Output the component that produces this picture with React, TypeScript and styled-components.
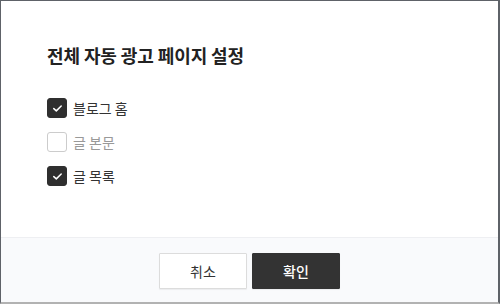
import React, { useState } from "react";
import styled, { createGlobalStyle } from "styled-components";

const Global = createGlobalStyle`
  html, body { margin: 0; padding: 0; background: #fff; }
  body { font-family: "Noto Sans CJK KR", "Noto Sans", sans-serif; }
  * { box-sizing: border-box; }
`;

const Frame = styled.div`
  width: 500px;
  height: 304px;
  display: flex;
  flex-direction: column;
  border-top: 1px solid #5e6268;
  border-left: 1px solid #5e6268;
  border-right: 2px solid #5e6268;
  border-bottom: 2px solid #b2b2b2;
  background: #fff;
`;

const Body = styled.div`
  flex: 1;
  padding: 41px 46px 0;
  display: flex;
  flex-direction: column;
`;

const Title = styled.h2`
  margin: 0;
  font-size: 18px;
  line-height: 26px;
  font-weight: 700;
  color: #222;
  letter-spacing: -0.1px;
`;

const List = styled.div`
  margin-top: 30px;
  display: flex;
  flex-direction: column;
  gap: 14px;
`;

const Row = styled.label`
  display: flex;
  align-items: center;
  gap: 6px;
  height: 20px;
  cursor: pointer;
`;

const Box = styled.span<{ $checked: boolean }>`
  width: 20px;
  height: 20px;
  border-radius: 3px;
  display: flex;
  align-items: center;
  justify-content: center;
  background: ${(p) => (p.$checked ? "#2f2f2f" : "#fff")};
  border: 1px solid ${(p) => (p.$checked ? "#2f2f2f" : "#ccc")};
`;

const Label = styled.span<{ $checked: boolean }>`
  font-size: 14px;
  line-height: 20px;
  color: ${(p) => (p.$checked ? "#333" : "#999")};
`;

const Footer = styled.div`
  height: 65px;
  border-top: 1px solid #eeeff2;
  background: #f9fafc;
  display: flex;
  justify-content: center;
  align-items: flex-start;
  padding-top: 15px;
  gap: 5px;
`;

const Button = styled.button<{ $primary?: boolean }>`
  width: 88px;
  height: 36px;
  font-family: inherit;
  font-size: 14px;
  border-radius: 1px;
  cursor: pointer;
  background: ${(p) => (p.$primary ? "#333" : "#fff")};
  color: ${(p) => (p.$primary ? "#fff" : "#333")};
  border: 1px solid ${(p) => (p.$primary ? "#333" : "#dcdcdc")};
  font-weight: ${(p) => (p.$primary ? 500 : 400)};
  box-shadow: 0 1px 1px rgba(0, 0, 0, 0.06);
`;

const Check = () => (
  <svg width="11" height="9" viewBox="0 0 11 9" fill="none">
    <path d="M1.8 4.6 L4.3 6.9 L9.2 2" stroke="#fff" strokeWidth="1.5" strokeLinecap="round" strokeLinejoin="round" />
  </svg>
);

export default function App() {
  const [items, setItems] = useState([
    { label: "블로그 홈", checked: true },
    { label: "글 본문", checked: false },
    { label: "글 목록", checked: true },
  ]);
  const toggle = (i: number) =>
    setItems((s) => s.map((it, j) => (j === i ? { ...it, checked: !it.checked } : it)));
  return (
    <>
      <Global />
      <Frame>
        <Body>
          <Title>전체 자동 광고 페이지 설정</Title>
          <List>
            {items.map((it, i) => (
              <Row key={it.label} onClick={() => toggle(i)}>
                <Box $checked={it.checked}>{it.checked && <Check />}</Box>
                <Label $checked={it.checked}>{it.label}</Label>
              </Row>
            ))}
          </List>
        </Body>
        <Footer>
          <Button>취소</Button>
          <Button $primary>확인</Button>
        </Footer>
      </Frame>
    </>
  );
}
